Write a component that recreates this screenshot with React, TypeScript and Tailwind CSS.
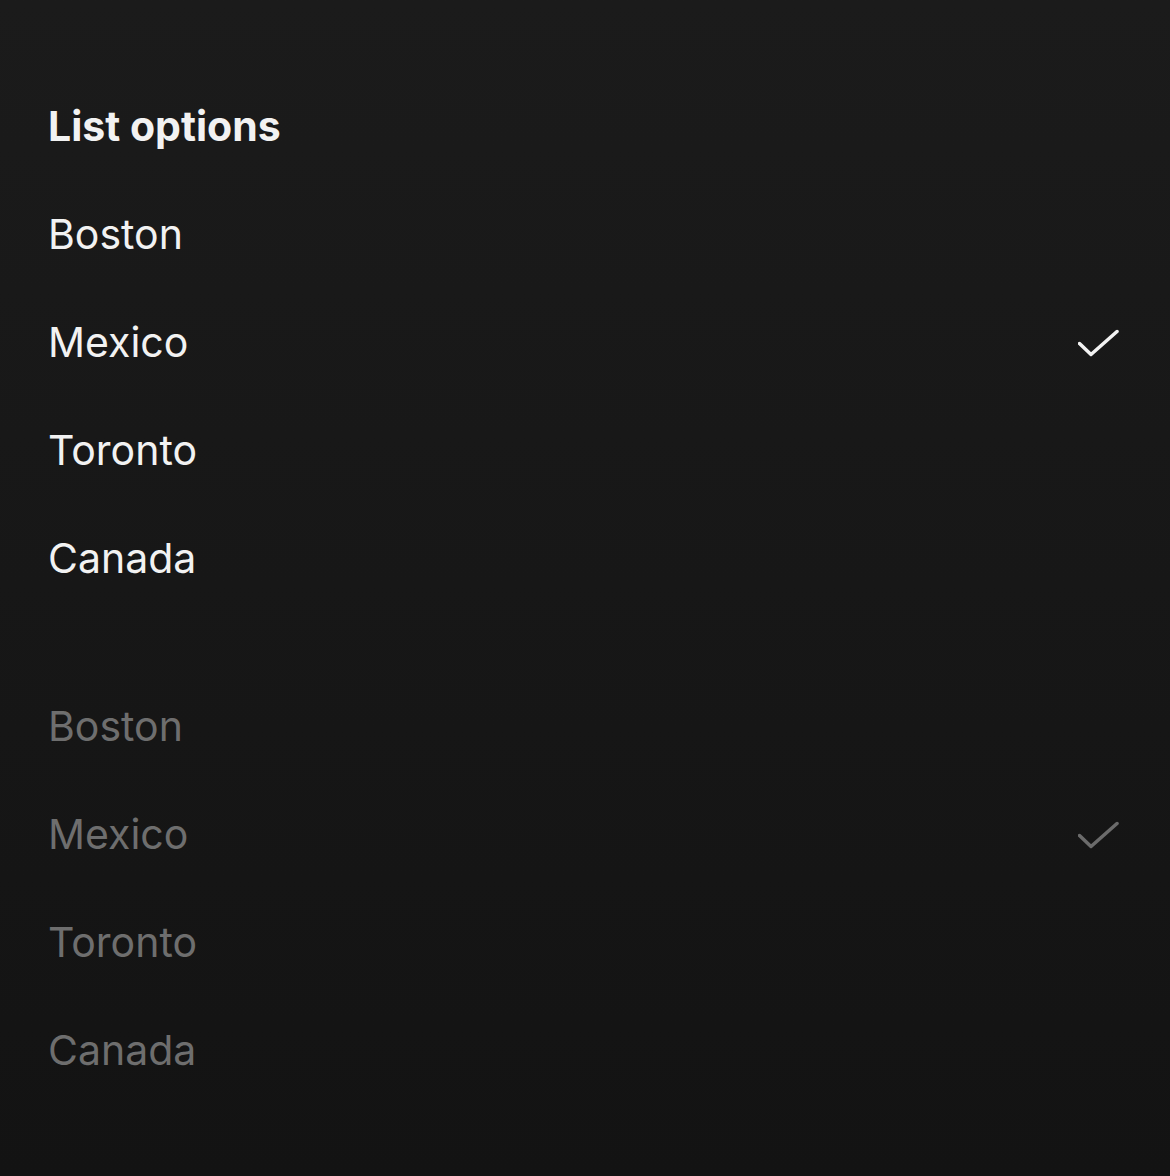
import React from "react";

const cities = ["Boston", "Mexico", "Toronto", "Canada"];

function Check({ color }: { color: string }) {
  return (
    <svg width="44" height="32" viewBox="0 0 44 32" fill="none">
      <polyline
        points="1.5,17.5 13,28.5 39,5.5"
        stroke={color}
        strokeWidth="3.5"
        strokeLinecap="round"
        strokeLinejoin="round"
      />
    </svg>
  );
}

function Group({ dim }: { dim?: boolean }) {
  return (
    <div className="flex flex-col">
      {cities.map((c) => (
        <div key={c} className="flex h-[108px] items-center justify-between">
          <span
            className={`text-[41px] leading-[40px] ${dim ? "text-[#6e6e6e]" : "text-[#f2f2f2]"}`}
          >
            {c}
          </span>
          {c === "Mexico" && <Check color={dim ? "#6b6b6b" : "#f2f2f2"} />}
        </div>
      ))}
    </div>
  );
}

export default function App() {
  return (
    <div
      className="flex h-[1176px] w-full flex-col bg-linear-to-b from-[#1b1b1b] to-[#131313] px-12 py-[72px]"
      style={{ fontFamily: "Inter, 'Noto Sans', sans-serif" }}
    >
      <div className="flex h-[108px] items-center">
        <h1 className="text-[41px] font-bold leading-[40px] text-[#f2f2f2]">
          List options
        </h1>
      </div>
      <Group />
      <div className="h-[60px]" />
      <Group dim />
    </div>
  );
}
